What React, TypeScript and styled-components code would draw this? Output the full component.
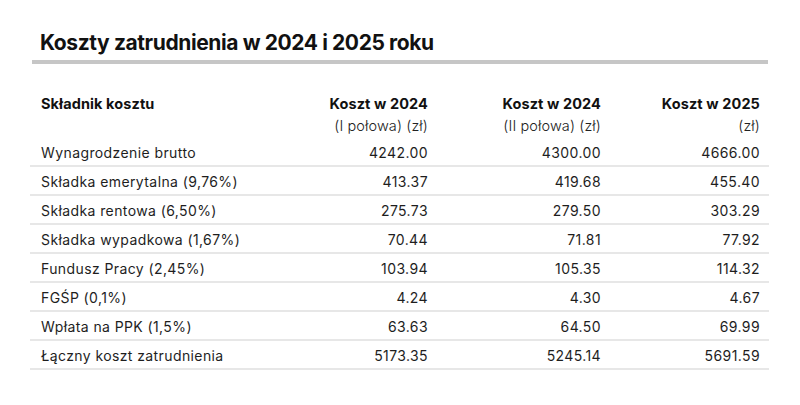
import React from "react";
import styled, { createGlobalStyle } from "styled-components";

const Global = createGlobalStyle`
  html, body { margin: 0; padding: 0; background: #ffffff; }
  body { font-family: Inter, "Noto Sans", sans-serif; color: #1a1a1a; }
`;

const Page = styled.div`
  width: 800px;
  height: 405px;
  box-sizing: border-box;
  padding: 30px 0 0 0;
  overflow: hidden;
`;

const Title = styled.h1`
  margin: 0 0 0 40px;
  font-size: 21px;
  line-height: 26px;
  font-weight: 700;
  letter-spacing: -0.4px;
  color: #111111;
`;

const Rule = styled.div`
  margin: 4px 32px 0 32px;
  height: 4px;
  background: #c6c6c6;
`;

const Table = styled.div`
  margin: 27px 0 0 30px;
  width: 739px;
  display: grid;
  grid-template-columns: 235px 172px 173px 159px;
`;

const HeadCell = styled.div<{ $right?: boolean }>`
  display: flex;
  flex-direction: column;
  align-items: ${(p) => (p.$right ? "flex-end" : "flex-start")};
  padding: ${(p) => (p.$right ? "2px 9px 0 0" : "2px 0 0 11px")};
  height: 45px;
`;

const HeadMain = styled.span`
  font-size: 14.5px;
  line-height: 22px;
  font-weight: 700;
  color: #111111;
  letter-spacing: 0.1px;
`;

const HeadSub = styled.span`
  font-size: 14.5px;
  line-height: 22px;
  font-weight: 300;
  color: #222222;
  letter-spacing: 0.1px;
`;

const Cell = styled.div<{ $right?: boolean }>`
  box-sizing: content-box;
  border-bottom: 2px solid #e7e7e7;
  display: flex;
  align-items: center;
  justify-content: ${(p) => (p.$right ? "flex-end" : "flex-start")};
  padding: ${(p) => (p.$right ? "3px 9px 0 0" : "3px 0 0 11px")};
  height: 24px;
  font-size: 14px;
  line-height: 18px;
  font-weight: 400;
  letter-spacing: 0.4px;
  color: #1e1e1e;
`;

const rows: [string, string, string, string][] = [
  ["Wynagrodzenie brutto", "4242.00", "4300.00", "4666.00"],
  ["Składka emerytalna (9,76%)", "413.37", "419.68", "455.40"],
  ["Składka rentowa (6,50%)", "275.73", "279.50", "303.29"],
  ["Składka wypadkowa (1,67%)", "70.44", "71.81", "77.92"],
  ["Fundusz Pracy (2,45%)", "103.94", "105.35", "114.32"],
  ["FGŚP (0,1%)", "4.24", "4.30", "4.67"],
  ["Wpłata na PPK (1,5%)", "63.63", "64.50", "69.99"],
  ["Łączny koszt zatrudnienia", "5173.35", "5245.14", "5691.59"],
];

export default function App() {
  return (
    <Page>
      <Global />
      <Title>Koszty zatrudnienia w 2024 i 2025 roku</Title>
      <Rule />
      <Table>
        <HeadCell>
          <HeadMain>Składnik kosztu</HeadMain>
        </HeadCell>
        <HeadCell $right>
          <HeadMain>Koszt w 2024</HeadMain>
          <HeadSub>(I połowa) (zł)</HeadSub>
        </HeadCell>
        <HeadCell $right>
          <HeadMain>Koszt w 2024</HeadMain>
          <HeadSub>(II połowa) (zł)</HeadSub>
        </HeadCell>
        <HeadCell $right>
          <HeadMain>Koszt w 2025</HeadMain>
          <HeadSub>(zł)</HeadSub>
        </HeadCell>
        {rows.map((r) => (
          <React.Fragment key={r[0]}>
            <Cell>{r[0]}</Cell>
            <Cell $right>{r[1]}</Cell>
            <Cell $right>{r[2]}</Cell>
            <Cell $right>{r[3]}</Cell>
          </React.Fragment>
        ))}
      </Table>
    </Page>
  );
}
